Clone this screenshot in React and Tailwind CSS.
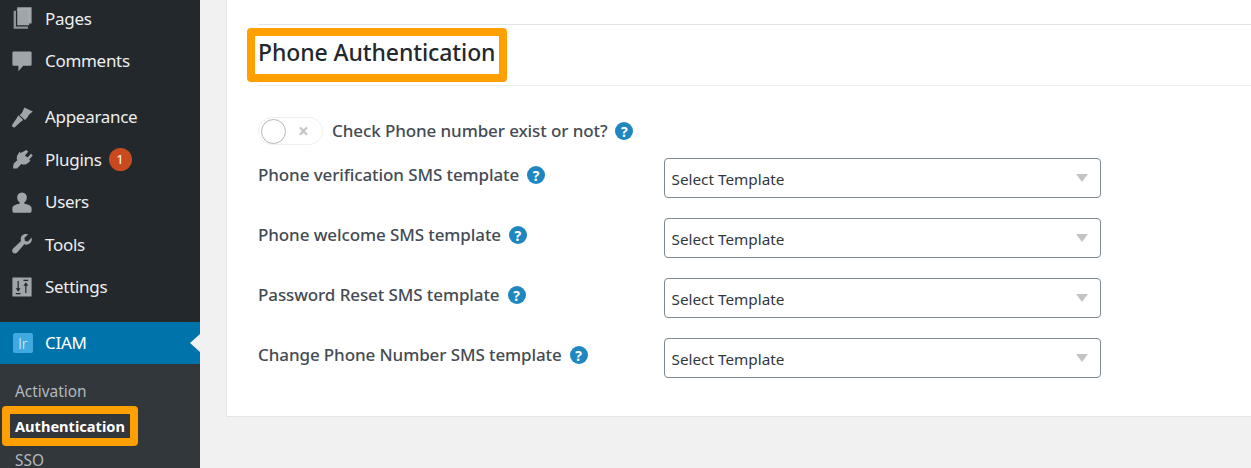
import React from "react";

function Icon({ children }) {
  return (
    <svg viewBox="0 0 20 20" className="w-[24px] h-[24px] shrink-0" fill="#a0a5aa">
      {children}
    </svg>
  );
}

const icons = {
  pages: (
    <>
      <path d="M6 1h12v13.500h-2V16H6z" fill="#a0a5aa" />
      <path d="M3 4h2v13h10v2H3z" fill="#8d9297" />
      <path d="M5.500 3.500L16 2v12" fill="none" stroke="#b4b8bc" strokeWidth="0.5" />
    </>
  ),
  comments: <path d="M3 2h14a1 1 0 0 1 1 1v10a1 1 0 0 1-1 1h-6l-4 4.500V14H3a1 1 0 0 1-1-1V3a1 1 0 0 1 1-1z" />,
  appearance: (
    <path d="M12 2l7 3.500-3 2.500-2 3-1.500 1.500-4.500-4 2-2zM7 8.500l4 4-2 1.500L4 18.500c-1 .6-2.600-.4-2.200-1.800L5.500 11z" />
  ),
  plugins: (
    <path d="M13.500 2.500l1.700 1.300-2.700 3.200 2.200 1.700 2.800-3.100 1.500 1.400-3 3.400 1 1-1.800 1.700c-1.800 1.700-4 2-5.800 1L6 18H2.500l.5-4 3-3c-.8-1.700-.4-3.800 1-5.300L7.800 4l1 1z" />
  ),
  users: (
    <path d="M10 2a4 4 0 0 1 4 4.500c0 1.700-.9 3-2 3.800v1.200c3 .4 6 1.600 6 3.500v2.500c0 .8-.6 1.500-1.500 1.500h-13C2.600 19 2 18.300 2 17.500V15c0-1.900 3-3.100 6-3.500v-1.200c-1.100-.8-2-2.100-2-3.800A4 4 0 0 1 10 2z" />
  ),
  tools: (
    <path d="M18 4.500c.6 2-.1 4-1.600 5.100-1.300 1-3 1.200-4.500.7L6 17c-1 1-2.600 1.100-3.500.2-1-1-.9-2.500.1-3.500l6.600-6.100c-.5-1.500-.3-3.200.7-4.500C11 2 13 1.400 15 2l-3 3 .5 2.500L15 8z" />
  ),
  settings: (
    <>
      <path d="M2.500 2h15a.5.5 0 0 1 .5.5v15a.5.5 0 0 1-.5.500h-15a.5.5 0 0 1-.5-.5v-15a.5.5 0 0 1 .5-.5z" />
      <path d="M6.300 5h1v6h1.500l-2 3-2-3h1.500zM12.700 15V9h-1.500l2-3 2 3h-1.500v6zM4.800 15h4v1h-4zM11.200 4h4v1h-4z" fill="#23282d" />
    </>
  ),
};

function MenuItem({ icon, label, badge }) {
  return (
    <div className="h-[42.500px] pl-[10px] flex items-center">
      <Icon>{icons[icon]}</Icon>
      <span className="ml-[11px] text-[17px] text-[#eeeeee] tracking-[-0.3px]">{label}</span>
      {badge && (
        <span className="ml-[7px] w-[23px] h-[23px] rounded-full bg-[#ca4a1f] text-white text-[13px] flex items-center justify-center">
          {badge}
        </span>
      )}
    </div>
  );
}

function Help() {
  return (
    <span className="w-[18px] h-[18px] rounded-full bg-[#2086bf] text-white text-[14px] font-bold flex items-center justify-center shrink-0">
      ?
    </span>
  );
}

function Row({ label }) {
  return (
    <div className="h-[60px] flex items-start">
      <div className="w-[406px] flex items-center gap-[8px] pt-[3px] h-[28px] box-content">
        <span className="text-[17px] font-medium text-[#444b52] tracking-[-0.1px] whitespace-nowrap">{label}</span>
        <Help />
      </div>
      <div className="w-[437px] h-[40px] border border-[#7e8993] rounded-[4px] bg-white flex items-center justify-between pl-[6.500px] pr-[12px]">
        <span className="text-[15.300px] text-[#32373c] pt-[2px]">Select Template</span>
        <span className="w-0 h-0 border-x-[6.500px] border-x-transparent border-t-[8px] border-t-[#c4c4c4]" />
      </div>
    </div>
  );
}

export default function App() {
  return (
    <div className="w-[1251px] h-[468px] flex overflow-hidden bg-[#f1f1f1] font-['Noto_Sans','Open_Sans',sans-serif]">
      <aside className="w-[200px] h-[468px] shrink-0 bg-[#23282d] overflow-hidden">
        <div className="-mt-[3px]">
          <MenuItem icon="pages" label="Pages" />
          <MenuItem icon="comments" label="Comments" />
          <div className="h-[13.500px]" />
          <MenuItem icon="appearance" label="Appearance" />
          <MenuItem icon="plugins" label="Plugins" badge="1" />
          <MenuItem icon="users" label="Users" />
          <MenuItem icon="tools" label="Tools" />
          <MenuItem icon="settings" label="Settings" />
          <div className="h-[13.500px]" />
          <div className="relative h-[42px] bg-[#0073aa] pl-[13px] flex items-center">
            <span className="w-[20px] h-[20px] rounded-[2px] bg-[#3fa9e0] text-[#d9f0fc] text-[15px] font-light leading-[20px] flex items-end justify-center">
              lr
            </span>
            <span className="ml-[12px] text-[17px] text-white tracking-[-0.3px] pt-[1px]">CIAM</span>
            <span className="absolute right-0 top-[12px] w-0 h-0 border-y-[9px] border-y-transparent border-r-[10px] border-r-[#f1f1f1]" />
          </div>
          <div className="bg-[#32373c] h-[120px] pl-[15px] pt-[16px] relative">
            <div className="h-[34px] text-[15.400px] leading-[24px] text-[#b4b9be]">Activation</div>
            <div className="h-[35px] text-[14.600px] leading-[24px] font-bold text-white relative">
              Authentication
              <span className="absolute -left-[13px] -top-[8px] w-[136px] h-[40px] border-[8px] border-[#ff9f00] rounded-[4px]" />
            </div>
            <div className="text-[15.400px] leading-[24px] text-[#b4b9be]">SSO</div>
          </div>
        </div>
      </aside>
      <main className="flex-1 min-w-0 pl-[26px]">
        <section className="h-[417px] bg-white border border-[#e5e5e5] border-t-0 border-r-0 pl-[31px]">
          <div className="h-[25px] border-b border-[#e2e4e7]" />
          <div className="relative h-[61px] border-b border-[#eeeeee] flex items-center">
            <h1 className="text-[23px] font-medium text-[#23282d] tracking-[-0.1px] pb-[6px] leading-none">Phone Authentication</h1>
            <span className="absolute -left-[11px] top-[3px] w-[260px] h-[54px] border-[8px] border-[#ff9f00] rounded-[4px]" />
          </div>
          <div className="flex items-center h-[28px] mt-[31px]">
            <span className="relative w-[65px] h-[28px] rounded-full border border-[#f0f0f0] bg-white shrink-0">
              <span className="absolute left-[2px] top-[1px] w-[25px] h-[25px] rounded-full border border-[#b5b5b5] bg-white" />
              <span className="absolute left-[39px] top-[3px] text-[#c4c4c4] text-[19px] leading-[20px] font-bold">×</span>
            </span>
            <span className="ml-[9px] text-[17px] font-medium text-[#444b52] tracking-[-0.1px] whitespace-nowrap">Check Phone number exist or not?</span>
            <span className="ml-[8px]"><Help /></span>
          </div>
          <div className="mt-[13px]">
            <Row label="Phone verification SMS template" />
            <Row label="Phone welcome SMS template" />
            <Row label="Password Reset SMS template" />
            <Row label="Change Phone Number SMS template" />
          </div>
        </section>
      </main>
    </div>
  );
}
